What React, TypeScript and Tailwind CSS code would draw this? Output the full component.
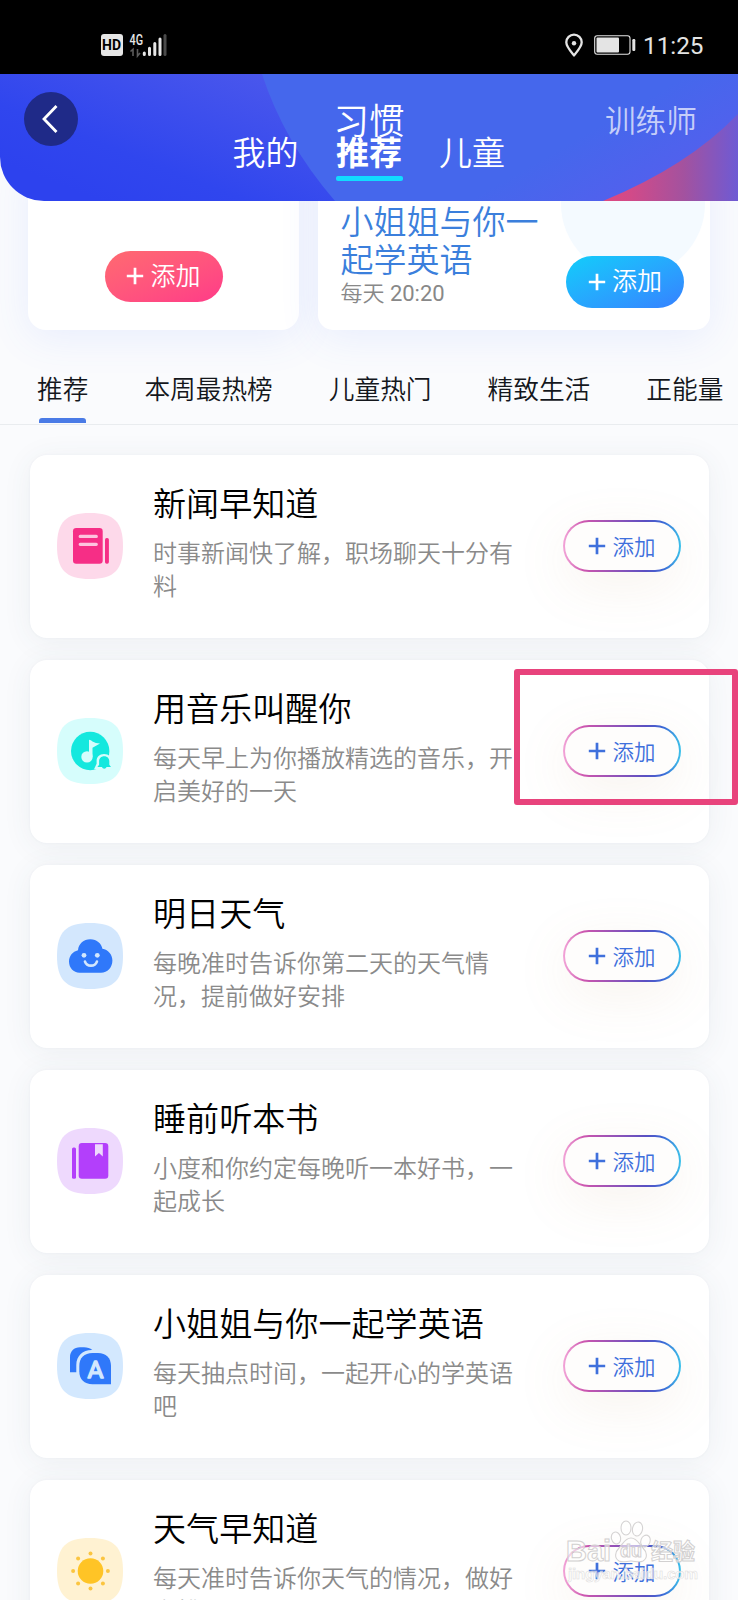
import type { ReactNode } from "react";

const FONT = "font-['Noto_Sans_CJK_SC','Noto_Sans',sans-serif]";

function Tile({ fill, children }: { fill: string; children: ReactNode }) {
  return (
    <svg viewBox="0 0 66 66" className="h-[66px] w-[66px] shrink-0">
      <path d="M33 0C57 0 66 9 66 33S57 66 33 66 0 57 0 33 9 0 33 0Z" fill={fill} />
      {children}
    </svg>
  );
}

function NewsIcon() {
  return (
    <Tile fill="#fdd9ea">
      <rect x="16" y="15" width="29.7" height="35.7" rx="3.2" fill="#f62e86" />
      <path d="M23.2 23.4H39.3M23.2 31.3H39.3" stroke="#fdc4df" strokeWidth="3.2" strokeLinecap="round" />
      <rect x="48" y="25" width="3.9" height="25.7" rx="1.7" fill="#f62e86" />
    </Tile>
  );
}

function MusicIcon() {
  return (
    <Tile fill="#d6fdfc">
      <circle cx="33.2" cy="33" r="19.2" fill="#14e8de" />
      <path d="M32 21.700c1.500 0 2.200.8 3.500 1.700 2.200 1.300 4.500 1.800 7.500 2.100l-7.500 4.300v9.200H32Z" fill="#d6fdfc" />
      <circle cx="30" cy="38.900" r="5.700" fill="#d6fdfc" />
      <path d="M47 36c-4.600 0-7.400 3-7.400 7v2.800l-2.600 5.400h18l-.5-8.200c0-4-2.500-7-7.500-7Z" fill="#d6fdfc" />
      <path d="M47.200 38.200c-3.200 0-5.100 2.200-5.100 5v3.600l-1.700 2.300h4.500a2.500 2.500 0 0 0 4.700 0H54l-1.700-2.300v-3.600c0-2.800-1.900-5-5.100-5Z" fill="#14e8de" />
    </Tile>
  );
}

function CloudIcon() {
  return (
    <Tile fill="#d3e7fd">
      <path d="M22.500 49.700C16.500 49.700 12 45 12 38.600 12 33 15.600 28.600 21 27.200 21.600 20.800 26.600 16.300 33.300 16.300S44.600 20.800 45.400 25.800C51 26.600 55.400 31.500 55.400 37.500 55.400 44.500 50.500 49.700 44 49.700Z" fill="#2f78fa" />
      <circle cx="27" cy="32.300" r="2.400" fill="#d3e7fd" />
      <circle cx="40.300" cy="32.300" r="2.400" fill="#d3e7fd" />
      <path d="M28 38.600c1.900 5.400 9.900 5.400 11.900 0" fill="none" stroke="#d3e7fd" strokeWidth="2.700" strokeLinecap="round" />
    </Tile>
  );
}

function BookIcon() {
  return (
    <Tile fill="#eed9fd">
      <rect x="15" y="19.500" width="4" height="31.200" rx="1.500" fill="#b33ffb" />
      <rect x="21.700" y="15" width="29.600" height="35.700" rx="3.200" fill="#b33ffb" />
      <path d="M38 16.200h7.800v12.300l-3.900-3.600-3.900 3.600Z" fill="#eed9fd" />
    </Tile>
  );
}

function LetterIcon() {
  return (
    <Tile fill="#d3e8fe">
      <path d="M13 39.300V24.300c0-6 4-10 10-10h4c3.200 0 6.300 1 8.300 2.700C26.500 16.600 19.300 22.500 19.300 32v7.300Z" fill="#2f78fa" />
      <path d="M35.500 20H41c8 0 13 5 13 13v18.300H35.500c-8.200 0-13.200-5-13.200-13V33c0-8 5-13 13.200-13Z" fill="#2f78fa" />
      <text x="38.400" y="45" textAnchor="middle" fill="#d3e8fe" stroke="#d3e8fe" strokeWidth="1.500" strokeLinejoin="round" className="font-['Roboto',sans-serif] text-[24.500px] font-normal">A</text>
    </Tile>
  );
}

function SunIcon() {
  return (
    <Tile fill="#fff2d2">
      <circle cx="33.500" cy="33" r="12.800" fill="#ffc426" />
      <g fill="#fbc540">
        <circle cx="33.500" cy="15.600" r="2" />
        <circle cx="33.500" cy="50.400" r="2" />
        <circle cx="16.100" cy="33" r="2" />
        <circle cx="50.900" cy="33" r="2" />
        <circle cx="21.100" cy="20.600" r="2" />
        <circle cx="45.900" cy="20.600" r="2" />
        <circle cx="21.100" cy="45.400" r="2" />
        <circle cx="45.900" cy="45.400" r="2" />
      </g>
    </Tile>
  );
}

function Plus() {
  return (
    <svg viewBox="0 0 18 18" className="h-[18px] w-[18px] shrink-0">
      <path d="M9 .8V17.200M.8 9H17.200" stroke="currentColor" strokeWidth="2.700" />
    </svg>
  );
}

const habits = [
  { icon: <NewsIcon />, title: "新闻早知道", lines: ["时事新闻快了解，职场聊天十分有", "料"] },
  { icon: <MusicIcon />, title: "用音乐叫醒你", lines: ["每天早上为你播放精选的音乐，开", "启美好的一天"] },
  { icon: <CloudIcon />, title: "明日天气", lines: ["每晚准时告诉你第二天的天气情", "况，提前做好安排"] },
  { icon: <BookIcon />, title: "睡前听本书", lines: ["小度和你约定每晚听一本好书，一", "起成长"] },
  { icon: <LetterIcon />, title: "小姐姐与你一起学英语", lines: ["每天抽点时间，一起开心的学英语", "吧"] },
  { icon: <SunIcon />, title: "天气早知道", lines: ["每天准时告诉你天气的情况，做好", "安排"] },
];

const tabs = ["推荐", "本周最热榜", "儿童热门", "精致生活", "正能量"];

function StatusBar() {
  return (
    <div className="flex h-[74px] items-start justify-between bg-black pr-[34px] pl-[100.500px] text-[#e4e4e4]">
      <div className="flex pt-[34px]">
        <div className="flex h-[22px] w-[22px] items-center justify-center rounded-[3px] bg-[#e6e6e6] font-['Roboto',sans-serif] text-[14px] leading-none font-bold text-black">
          HD
        </div>
        <svg viewBox="0 0 38 24" className="-mt-[0.500px] ml-[6.500px] h-6 w-[38px]">
          <text x="0.500" y="10.500" textLength="13.500" lengthAdjust="spacingAndGlyphs" fill="#e6e6e6" className="font-['Roboto',sans-serif] text-[14px] font-medium">4G</text>
          <path d="M1.500 17.500l2.500-2.300V22M8.500 15v7l2.500-3" fill="none" stroke="#5c5c5c" strokeWidth="1.600" />
          <path d="M15.300 19V20.500M20.500 14.200V20.500M25.800 9.500V20.500M31 5V20.500" stroke="#e6e6e6" strokeWidth="3" strokeLinecap="round" />
          <path d="M36 1.500V20.500" stroke="#4a4a4a" strokeWidth="3" strokeLinecap="round" />
        </svg>
      </div>
      <div className="flex pt-[33px]">
        <svg viewBox="0 0 18 24" className="h-6 w-[18px]">
          <path d="M9 22.200C5 17.500 1.300 13.800 1.300 9.300a7.700 7.700 0 0 1 15.400 0C16.700 13.800 13 17.500 9 22.200Z" fill="none" stroke="currentColor" strokeWidth="2.300" />
          <circle cx="9" cy="10.300" r="2.200" fill="currentColor" />
        </svg>
        <svg viewBox="0 0 42 20" className="mt-[2px] ml-[11px] h-5 w-[42px]">
          <rect x="0.700" y="0.700" width="35.300" height="18.600" rx="2.500" fill="none" stroke="currentColor" strokeWidth="1.100" />
          <rect x="2.500" y="2.500" width="22.500" height="15" rx="1" fill="currentColor" />
          <rect x="38.300" y="4" width="3" height="12" rx="1.200" fill="currentColor" />
        </svg>
        <div className="ml-[7px] w-[61px] font-['Roboto',sans-serif] text-[24.300px] leading-[26px] font-normal whitespace-nowrap">11:25</div>
      </div>
    </div>
  );
}

function Header() {
  return (
    <header className="relative z-10 h-[127px] overflow-hidden rounded-bl-[44px] text-white">
      <svg viewBox="0 0 738 127" className="absolute inset-0 h-[127px] w-[738px]">
        <defs>
          <linearGradient id="hb" gradientUnits="userSpaceOnUse" x1="100" y1="127" x2="165" y2="-40">
            <stop offset="0" stopColor="#2d42ee" />
            <stop offset="0.300" stopColor="#3046ee" />
            <stop offset="1" stopColor="#4a57ec" />
          </linearGradient>
          <linearGradient id="hr" x1="0" y1="0" x2="1" y2="0">
            <stop offset="0" stopColor="#df4880" />
            <stop offset="0.200" stopColor="#d24a88" />
            <stop offset="0.600" stopColor="#a3529f" />
            <stop offset="1" stopColor="#6e5ad4" />
          </linearGradient>
          <linearGradient id="hm" gradientUnits="userSpaceOnUse" x1="520" y1="60" x2="600" y2="200">
            <stop offset="0.200" stopColor="#4567ec" />
            <stop offset="1" stopColor="#5a5cee" />
          </linearGradient>
        </defs>
        <rect width="738" height="127" fill="url(#hb)" />
        <path d="M262 0Q284 68 335 127H738V0Z" fill="url(#hm)" />
        <path d="M603 127Q688 92 738 40V127Z" fill="url(#hr)" />
      </svg>
      <div className="relative grid grid-cols-3 items-start pt-[18px] pr-[41px] pl-6">
        <button className="flex h-[54px] w-[54px] items-center justify-center rounded-full bg-[#1f2a88]">
          <svg viewBox="0 0 16 28" className="mr-[3px] h-7 w-4">
            <path d="M14.500 1 2 14 14.500 27" fill="none" stroke="white" strokeWidth="2.800" />
          </svg>
        </button>
        <div className="pt-[4.500px] pl-[17px] text-center text-[35.500px] leading-[44px]">习惯</div>
        <div className="pt-[7px] text-right text-[30.700px] leading-[40px] text-white/70">训练师</div>
      </div>
      <nav className="relative -mt-[17px] flex pl-[232.500px] text-[33px] leading-[44px]">
        <div className="w-[66px]">我的</div>
        <div className="ml-[37.500px] w-[68px] font-bold">
          推荐
          <div className="-ml-[0.500px] mt-[3px] h-[5px] w-[67px] rounded-[2px] bg-[#12dcff]" />
        </div>
        <div className="ml-[35px]">儿童</div>
      </nav>
    </header>
  );
}

function Featured() {
  return (
    <section className="-mt-[44px] flex gap-[19px] pr-7 pl-7">
      <div className="flex h-[173px] w-[271px] items-end justify-center rounded-b-[18px] bg-white pb-[28px] shadow-[0_8px_40px_rgba(80,120,255,0.100)]">
        <button className="flex h-[51px] w-[118px] items-center justify-center gap-[6px] rounded-full bg-linear-to-br from-[#ff6a70] to-[#ff3a88] pb-px text-[25px] leading-none text-white">
          <Plus />
          <span className="-mt-[4px]">添加</span>
        </button>
      </div>
      <div className="relative flex h-[172.500px] w-[392px] items-end justify-between rounded-b-[15px] bg-white pr-[26px] pl-[22.500px] shadow-[0_8px_40px_rgba(80,120,255,0.100)]">
        <div className="absolute top-[-25px] left-[243px] h-[144px] w-[144px] rounded-full bg-[#f4faff]" />
        <div className="relative pb-[23px]">
          <div className="-mt-px text-[33px] leading-[38px] text-[#3b7fdc]">小姐姐与你一<br />起学英语</div>
          <div className="mt-[4px] font-['Roboto','Noto_Sans_CJK_SC',sans-serif] text-[22px] leading-[26px] text-[#888]">每天 <span className="font-normal">20:20</span></div>
        </div>
        <button className="relative mb-[21.500px] flex h-[52px] w-[118px] items-center justify-center gap-[6px] rounded-full bg-linear-to-br from-[#10cdfa] to-[#3580ff] pb-px text-[25px] leading-none text-white">
          <Plus />
          <span className="-mt-[4px]">添加</span>
        </button>
      </div>
    </section>
  );
}

function Watermark() {
  return (
    <div className="absolute top-[1519px] left-[566px] h-[68px] w-[140px]">
      <svg viewBox="0 0 140 68" className="h-[68px] w-[140px]">
        <g fill="#ffffff" fillOpacity="0.600" stroke="#d5d3d3" strokeWidth="1.100">
          <ellipse cx="60" cy="9" rx="5" ry="7" />
          <ellipse cx="71.500" cy="10" rx="5" ry="7" transform="rotate(12 71.500 10)" />
          <ellipse cx="50" cy="19" rx="4.600" ry="6" transform="rotate(-15 50 19)" />
          <ellipse cx="79.500" cy="22" rx="4.600" ry="6" transform="rotate(20 79.500 22)" />
          <path d="M65 19c6 0 8 6 12 10 4 4 5 10 0 13-4 2-8 0-12 0s-8 2-12 0c-5-3-4-9 0-13 4-4 6-10 12-10Z" />
        </g>
        <g fill="#ffffff" fillOpacity="0.600" stroke="#d2d0d0" strokeWidth="1">
          <text x="0" y="42" className="font-['Liberation_Sans',sans-serif] text-[29px] font-bold">Bai</text>
          <text x="54" y="38" className="font-['Liberation_Sans',sans-serif] text-[18px] font-bold">du</text>
          <text x="85" y="40" className="font-['Noto_Sans_CJK_SC',sans-serif] text-[22px] font-bold">经验</text>
          <text x="2" y="60" textLength="130" stroke="#dcdada" strokeWidth="0.500" className="font-['Liberation_Sans',sans-serif] text-[15.500px] font-bold">jingyan.baidu.com</text>
        </g>
      </svg>
    </div>
  );
}

export default function App() {
  return (
    <div className={`relative h-[1600px] w-[738px] overflow-hidden bg-[#fafbfd] font-[350] ${FONT}`}>
      <StatusBar />
      <Header />
      <Featured />
      <div className="flex h-[95px] items-start gap-[56px] border-b-[1.500px] border-[#e9ecef] pt-[39px] pl-[37px] text-[25.700px] leading-[38px] whitespace-nowrap text-[#14171c]">
        {tabs.map((t, i) => (
          <div key={t} className="shrink-0">
            {t}
            {i === 0 && <div className="mx-auto mt-[11px] h-[5px] w-[47px] rounded-t-[3px] bg-[#4a7be6]" />}
          </div>
        ))}
      </div>
      <main className="flex flex-col gap-[22px] pt-[29.500px] pr-[29px] pl-[29.500px]">
        {habits.map((h) => (
          <article key={h.title} className="flex h-[183px] shrink-0 items-center rounded-[17px] bg-white pr-7 pl-[27.500px] shadow-[0_4px_30px_rgba(60,90,105,0.070),0_0_3px_rgba(60,85,110,0.050)]">
            {h.icon}
            <div className="ml-[30px] w-[380px] shrink-0 self-start pt-[25px]">
              <h2 className="text-[33.100px] leading-[44px] text-black">{h.title}</h2>
              <p className="mt-[11.500px] text-[24px] leading-[33px] whitespace-nowrap text-[#8a8a8a]">
                {h.lines[0]}
                <br />
                {h.lines[1]}
              </p>
            </div>
            <div className="ml-auto h-[52px] w-[118px] shrink-0 rounded-full bg-[linear-gradient(90deg,#f3a6d8_0%,#cc55ae_18%,#5a50c2_70%,#3b68d6_85%,#3cc2ea_100%)] p-[2px] shadow-[0_14px_54px_rgba(190,140,90,0.100)]">
              <button className="flex h-full w-full items-center justify-center gap-[6px] rounded-full bg-[#fefdfc] text-[21.500px] leading-none text-[#3f70dc]">
                <Plus />
                <span className="-mt-[1px]">添加</span>
              </button>
            </div>
          </article>
        ))}
      </main>
      <div className="absolute top-[668.500px] left-[514px] h-[136.500px] w-[224px] rounded-[3px] border-[6px] border-[#e8437c]" />
      <Watermark />
    </div>
  );
}
